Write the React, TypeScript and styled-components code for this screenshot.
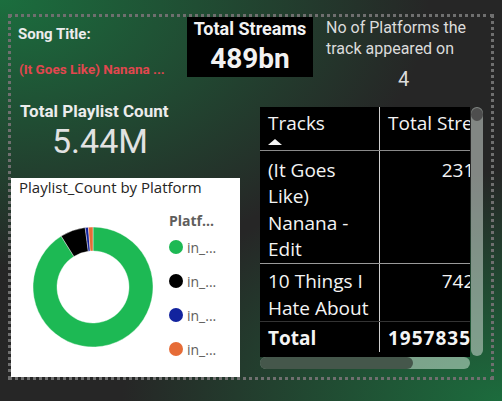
import styled, { createGlobalStyle } from "styled-components";

const GlobalStyle = createGlobalStyle`
  html, body {
    margin: 0;
    padding: 0;
    overflow: hidden;
    background: #262626;
  }
`;

const Page = styled.div`
  box-sizing: border-box;
  width: 502px;
  height: 401px;
  padding: 14px 8px 21px 8px;
  background:
    radial-gradient(ellipse 430px 270px at 0 0, #1b6e3e 0%, rgba(38, 38, 38, 0) 100%),
    radial-gradient(ellipse 380px 230px at 100% 100%, #1c6c3d 0%, rgba(38, 38, 38, 0) 100%),
    #262626;
  font-family: Roboto, "Liberation Sans", sans-serif;
`;

const Frame = styled.div`
  box-sizing: border-box;
  width: 486px;
  height: 366px;
  border: 3px dotted #6f6f6f;
  display: flex;
  flex-direction: column;
`;

const TopRow = styled.div`
  display: flex;
  height: 60px;
  flex-shrink: 0;
`;

const SongBlock = styled.div`
  width: 176px;
  padding: 8px 0 0 7px;
  box-sizing: border-box;
`;

const SongLabel = styled.div`
  font-size: 15px;
  line-height: 18px;
  font-weight: 700;
  color: #ececec;
`;

const SongName = styled.div`
  margin-top: 18px;
  padding-left: 1px;
  font-size: 13.5px;
  line-height: 16px;
  font-weight: 700;
  color: #e2474f;
  white-space: nowrap;
`;

const StreamsBox = styled.div`
  width: 126px;
  height: 60px;
  background: #000;
  color: #f2f2f2;
  text-align: center;
  font-weight: 700;
`;

const StreamsTitle = styled.div`
  font-size: 18px;
  line-height: 22px;
  padding-top: 1px;
`;

const StreamsValue = styled.div`
  margin-top: 3px;
  font-size: 28px;
  line-height: 32px;
`;

const PlatformsBlock = styled.div`
  margin-left: 13px;
  width: 160px;
  color: #dcdcdc;
`;

const PlatformsTitle = styled.div`
  font-size: 16px;
  line-height: 21px;
`;

const PlatformsValue = styled.div`
  margin-top: 8px;
  width: 155px;
  text-align: center;
  font-size: 20px;
  line-height: 24px;
`;

const MainRow = styled.div`
  display: flex;
  flex: 1;
`;

const LeftCol = styled.div`
  width: 229px;
  display: flex;
  flex-direction: column;
`;

const KpiTitle = styled.div`
  margin-top: 24px;
  padding-left: 9px;
  font-size: 17px;
  line-height: 20px;
  font-weight: 700;
  color: #ececec;
`;

const KpiValue = styled.div`
  width: 178px;
  text-align: center;
  font-size: 34px;
  line-height: 40px;
  color: #e2e2e2;
`;

const ChartCard = styled.div`
  margin-top: auto;
  height: 199px;
  background: #fff;
  font-family: "Open Sans", "Noto Sans", sans-serif;
  display: flex;
  flex-direction: column;
`;

const ChartTitle = styled.div`
  padding-left: 8px;
  font-size: 15px;
  line-height: 18px;
  color: #252423;
`;

const ChartBody = styled.div`
  display: flex;
`;

const Legend = styled.div`
  padding-left: 8px;
  padding-top: 15px;
  color: #605e5c;
`;

const LegendTitle = styled.div`
  font-size: 14px;
  line-height: 19px;
  font-weight: 700;
`;

const LegendItem = styled.div`
  height: 34px;
  display: flex;
  align-items: center;
  gap: 4px;
  font-size: 14px;
`;

const Dot = styled.span<{ $color: string }>`
  width: 14px;
  height: 14px;
  border-radius: 50%;
  background: ${(p) => p.$color};
`;

const RightCol = styled.div`
  padding: 30px 0 0 20px;
`;

const TableWrap = styled.div`
  display: grid;
  grid-template-columns: 210px 13px;
  grid-template-rows: 250px 12px;
`;

const Viewport = styled.div`
  background: #000;
  overflow: hidden;
  font-family: "Open Sans", "Noto Sans", sans-serif;
  font-size: 19px;
  line-height: 26.6px;
  color: #f4f4f4;
`;

const Row = styled.div<{ $line?: string }>`
  display: flex;
  width: 249px;
  border-bottom: 1px solid ${(p) => p.$line || "transparent"};
`;

const NameCell = styled.div<{ $pt: number; $bold?: boolean }>`
  box-sizing: border-box;
  width: 120px;
  padding: ${(p) => p.$pt}px 6px 0 8px;
  border-right: 1px solid #cfcfcf;
  font-weight: ${(p) => (p.$bold ? 700 : 400)};
`;

const ValueCell = styled.div<{ $pt: number; $pr?: number; $bold?: boolean; $left?: boolean }>`
  box-sizing: border-box;
  width: 129px;
  padding: ${(p) => p.$pt}px ${(p) => p.$pr ?? 8}px 0 8px;
  text-align: ${(p) => (p.$left ? "left" : "right")};
  white-space: nowrap;
  font-weight: ${(p) => (p.$bold ? 700 : 400)};
  letter-spacing: ${(p) => (p.$bold ? "1px" : "0")};
`;

const SortArrow = styled.div`
  margin-top: 2px;
  margin-bottom: 5px;
  width: 0;
  height: 0;
  border-left: 7px solid transparent;
  border-right: 7px solid transparent;
  border-bottom: 6px solid #f4f4f4;
`;

const VScroll = styled.div`
  margin-left: 1px;
  height: 249px;
  border-radius: 6px;
  background: rgba(205, 215, 210, 0.55);
  display: flex;
  justify-content: center;
  padding-top: 1px;
  box-sizing: border-box;
`;

const VThumb = styled.div`
  width: 12px;
  height: 13px;
  border-radius: 50%;
  background: #4e4e4e;
`;

const HScroll = styled.div`
  border-radius: 6px;
  background: rgba(200, 225, 210, 0.55);
`;

const HThumb = styled.div`
  height: 100%;
  border-radius: 6px;
  background: #45574b;
`;

const slices = [
  { color: "#1db954", from: 0, to: 328 },
  { color: "#000000", from: 328, to: 352.5 },
  { color: "#12239e", from: 352.5, to: 355.6 },
  { color: "#e66c37", from: 355.6, to: 360 },
];

const pt = (cx: number, cy: number, r: number, a: number) => {
  const rad = (a * Math.PI) / 180;
  return `${(cx + r * Math.sin(rad)).toFixed(2)} ${(cy - r * Math.cos(rad)).toFixed(2)}`;
};

const arcPath = (cx: number, cy: number, r0: number, r1: number, a0: number, a1: number) => {
  const large = a1 - a0 > 180 ? 1 : 0;
  return `M ${pt(cx, cy, r1, a0)} A ${r1} ${r1} 0 ${large} 1 ${pt(cx, cy, r1, a1)} L ${pt(
    cx,
    cy,
    r0,
    a1
  )} A ${r0} ${r0} 0 ${large} 0 ${pt(cx, cy, r0, a0)} Z`;
};

const Donut = () => (
  <svg width="150" height="170" viewBox="0 0 150 170">
    {slices.map((s) => (
      <path
        key={s.color}
        d={arcPath(82, 91, 36, 60, s.from, s.to)}
        fill={s.color}
        stroke="#fff"
        strokeWidth="0.4"
      />
    ))}
  </svg>
);

const App = () => {
  return (
    <>
      <GlobalStyle />
      <Page>
        <Frame>
          <TopRow>
            <SongBlock>
              <SongLabel>Song Title:</SongLabel>
              <SongName>(It Goes Like) Nanana ...</SongName>
            </SongBlock>
            <StreamsBox>
              <StreamsTitle>Total Streams</StreamsTitle>
              <StreamsValue>489bn</StreamsValue>
            </StreamsBox>
            <PlatformsBlock>
              <PlatformsTitle>No of Platforms the track appeared on</PlatformsTitle>
              <PlatformsValue>4</PlatformsValue>
            </PlatformsBlock>
          </TopRow>
          <MainRow>
            <LeftCol>
              <KpiTitle>Total Playlist Count</KpiTitle>
              <KpiValue>5.44M</KpiValue>
              <ChartCard>
                <ChartTitle>Playlist_Count by Platform</ChartTitle>
                <ChartBody>
                  <Donut />
                  <Legend>
                    <LegendTitle>Platf...</LegendTitle>
                    {slices.map((s) => (
                      <LegendItem key={s.color}>
                        <Dot $color={s.color} />
                        in_...
                      </LegendItem>
                    ))}
                  </Legend>
                </ChartBody>
              </ChartCard>
            </LeftCol>
            <RightCol>
              <TableWrap>
                <Viewport>
                  <Row $line="#8a8a8a">
                    <NameCell $pt={3}>
                      Tracks
                      <SortArrow />
                    </NameCell>
                    <ValueCell $pt={3} $left>
                      Total Streams
                    </ValueCell>
                  </Row>
                  <Row $line="#9a9a9a">
                    <NameCell $pt={6}>(It Goes Like) Nanana - Edit</NameCell>
                    <ValueCell $pt={6} $pr={13}>
                      23184
                    </ValueCell>
                  </Row>
                  <Row $line="#333">
                    <NameCell $pt={4}>10 Things I Hate About</NameCell>
                    <ValueCell $pt={4} $pr={13}>
                      74213
                    </ValueCell>
                  </Row>
                  <Row>
                    <NameCell $pt={3} $bold>
                      Total
                    </NameCell>
                    <ValueCell $pt={3} $bold>
                      1957835034
                    </ValueCell>
                  </Row>
                </Viewport>
                <VScroll>
                  <VThumb />
                </VScroll>
                <HScroll>
                  <HThumb style={{ width: "73%" }} />
                </HScroll>
              </TableWrap>
            </RightCol>
          </MainRow>
        </Frame>
      </Page>
    </>
  );
};

export default App;
